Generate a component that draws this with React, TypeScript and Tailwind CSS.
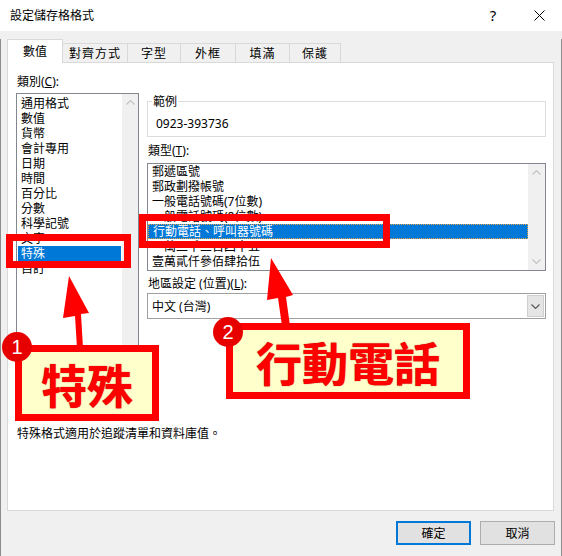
import React from "react";

const categories = ["通用格式", "數值", "貨幣", "會計專用", "日期", "時間", "百分比", "分數", "科學記號", "文字", "特殊", "自訂"];
const types = ["郵遞區號", "郵政劃撥帳號", "一般電話號碼(7位數)", "一般電話號碼(8位數)", "行動電話、呼叫器號碼", "一萬二千三百四十五", "壹萬貳仟參佰肆拾伍"];

function Chevron({ dir, color }: { dir: "up" | "down"; color: string }) {
    return (
        <svg width="9" height="5" viewBox="0 0 9 5">
            <path
                d={dir === "up" ? "M0.5 4.5 L4.5 0.6 L8.5 4.5" : "M0.5 0.5 L4.5 4.4 L8.5 0.5"}
                fill="none"
                stroke={color}
                strokeWidth="1.2"
            />
        </svg>
    );
}

function ScrollBar({ width }: { width: string }) {
    return (
        <div className={`${width} bg-[#f0f0f0] flex flex-col justify-between`}>
            <div className="h-[17px] flex items-center justify-center">
                <Chevron dir="up" color="#c2c2c2" />
            </div>
            <div className="h-[17px] flex items-center justify-center">
                <Chevron dir="down" color="#c2c2c2" />
            </div>
        </div>
    );
}

export default function App() {
    return (
        <div className="relative w-[562px] h-[556px] overflow-hidden bg-[#f0f0f0] text-[12px] leading-[15px] text-black font-['Noto_Sans','Noto_Sans_CJK_TC',sans-serif]">
            {/* title bar */}
            <div className="h-[31px] bg-white flex items-center">
                <span className="pl-[10px] flex-1">設定儲存格格式</span>
                <div className="w-[46px] h-full flex items-center justify-center text-[15px]">?</div>
                <div className="w-[46px] h-full flex items-center justify-center">
                    <svg width="11" height="11" viewBox="0 0 11 11">
                        <path d="M0.5 0.5 L10.5 10.5 M10.5 0.5 L0.5 10.5" stroke="#000" strokeWidth="1" />
                    </svg>
                </div>
            </div>

            {/* body */}
            <div className="h-[525px] border-l border-r border-b border-[#8c8c8c]">
                {/* tabs */}
                <div className="flex items-end h-[24px] ml-[6px] mt-[8px]">
                    <div className="relative z-10 w-[56px] h-[24px] bg-white border border-b-0 border-[#d9d9d9] flex items-center justify-center">數值</div>
                    <div className="-ml-px w-[66px] h-[20px] border border-b-0 border-[#d9d9d9] flex items-center justify-center tracking-[1px]">對齊方式</div>
                    <div className="-ml-px w-[54px] h-[20px] border border-b-0 border-[#d9d9d9] flex items-center justify-center tracking-[1px]">字型</div>
                    <div className="-ml-px w-[56px] h-[20px] border border-b-0 border-[#d9d9d9] flex items-center justify-center tracking-[1px]">外框</div>
                    <div className="-ml-px w-[55px] h-[20px] border border-b-0 border-[#d9d9d9] flex items-center justify-center tracking-[1px]">填滿</div>
                    <div className="-ml-px w-[52px] h-[20px] border border-b-0 border-[#d9d9d9] flex items-center justify-center tracking-[1px]">保護</div>
                </div>

                {/* panel */}
                <div className="ml-[6px] -mt-px w-[547px] h-[449px] bg-white border border-[#d9d9d9] flex flex-col">
                    <div className="flex pl-[8px] gap-[8px]">
                        {/* category column */}
                        <div className="w-[123px] pt-[11px]">
                            <div className="pl-px">類別(<span className="underline">C</span>):</div>
                            <div className="mt-[4px] h-[323px] border border-[#828790] flex">
                                <div className="flex-1 pt-[2px]">
                                    {categories.map((c) => (
                                        <div
                                            key={c}
                                            className={`mx-px h-[15px] pl-[3px] whitespace-nowrap ${c === "特殊" ? "bg-[#0078d7] text-white" : ""}`}
                                        >
                                            {c}
                                        </div>
                                    ))}
                                </div>
                                <ScrollBar width="w-[16px]" />
                            </div>
                        </div>

                        {/* right column */}
                        <div className="w-[399px] pt-[38px]">
                            <div className="relative h-[36px] border border-[#dcdcdc] pt-[14px] pl-[8px]">
                                <span className="absolute -top-[8px] left-[4px] bg-white px-px">範例</span>
                                0923-393736
                            </div>
                            <div className="mt-[6px] pl-px">類型(<span className="underline">T</span>):</div>
                            <div className="mt-[5px] h-[108px] border border-[#828790] flex">
                                <div className="flex-1">
                                    {types.map((t) => (
                                        <div
                                            key={t}
                                            className={`h-[15px] pl-[4px] whitespace-nowrap ${t.startsWith("行動") ? "bg-[#0078d7] text-white border border-dotted border-[#e8a445] pl-[3px] leading-[13px]" : ""}`}
                                        >
                                            {t}
                                        </div>
                                    ))}
                                </div>
                                <ScrollBar width="w-[17px]" />
                            </div>
                            <div className="mt-[5px] pl-px">地區設定 (位置)(<span className="underline">L</span>):</div>
                            <div className="mt-[2px] h-[26px] border border-[#a0a0a0] flex items-stretch">
                                <div className="flex-1 flex items-center pl-[4px]">中文 (台灣)</div>
                                <div className="w-[17px] my-px mr-px bg-[#e5e5e5] border border-[#cfcfcf] flex items-center justify-center">
                                    <Chevron dir="down" color="#555" />
                                </div>
                            </div>
                        </div>
                    </div>
                    <div className="pl-[9px] mt-[10px]">特殊格式適用於追蹤清單和資料庫值。</div>
                </div>

                {/* buttons */}
                <div className="flex justify-end gap-[9px] pr-[6px] mt-[10px]">
                    <button className="w-[75px] h-[24px] bg-[#e1e1e1] border-2 border-[#0078d7] flex items-center justify-center">確定</button>
                    <button className="w-[75px] h-[24px] bg-[#e1e1e1] border border-[#adadad] flex items-center justify-center">取消</button>
                </div>
            </div>

            {/* annotations */}
            <div className="absolute left-[6px] top-[234px] w-[125px] h-[34px] border-[7px] border-[#ff0000]" />
            <div className="absolute left-[139px] top-[214px] w-[251px] h-[34px] border-[7px] border-[#ff0000]" />
            <svg className="absolute left-0 top-0" width="562" height="556" viewBox="0 0 562 556">
                <polygon points="69,276 89,313 81,314 83,348 77,348 75,316 63,318" fill="#ff0000" />
                <polygon points="271,258 293,295 286,297 290,326 282,326 278,298 267,300" fill="#ff0000" />
            </svg>
            <div className="absolute left-[15px] top-[345px] w-[144px] h-[76px] border-[7px] border-[#ff0000] bg-[#ffffcc] flex items-center justify-center">
                <span className="text-[46px] leading-[50px] font-bold text-[#ff0000] font-['Noto_Sans_CJK_TC',sans-serif] [text-shadow:0_0_1px_#900]">特殊</span>
            </div>
            <div className="absolute left-[226px] top-[323px] w-[244px] h-[76px] border-[7px] border-[#ff0000] bg-[#ffffcc] flex items-center justify-center">
                <span className="text-[46px] leading-[50px] font-bold text-[#ff0000] font-['Noto_Sans_CJK_TC',sans-serif] [text-shadow:0_0_1px_#900]">行動電話</span>
            </div>
            <div className="absolute left-[2px] top-[332px] w-[30px] h-[30px] rounded-full bg-[#e60000] text-white text-[20px] leading-none flex items-center justify-center font-['Liberation_Sans',sans-serif]">1</div>
            <div className="absolute left-[213px] top-[317px] w-[30px] h-[30px] rounded-full bg-[#e60000] text-white text-[20px] leading-none flex items-center justify-center font-['Liberation_Sans',sans-serif]">2</div>
        </div>
    );
}
